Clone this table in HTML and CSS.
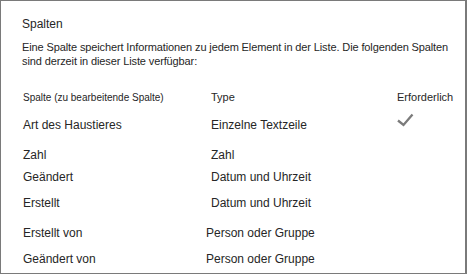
FILE: index.html
```html
<!DOCTYPE html>
<html>
<head>
    <title>Spalten</title>
    <link rel="stylesheet" href="styles.css">
    <meta name="viewport" content="width=device-width, initial-scale=1.0">
</head>
<body>
    <div class="panel">
        <h2>Spalten</h2>
        <p class="intro">Eine Spalte speichert Informationen zu jedem Element in der Liste. Die folgenden Spalten sind derzeit in dieser Liste verfügbar:</p>

        <div class="columns">
            <div class="row head">
                <span class="col-name">Spalte (zu bearbeitende Spalte)</span>
                <span>Type</span>
                <span>Erforderlich</span>
            </div>
            <div class="row tall">
                <span>Art des Haustieres</span>
                <span>Einzelne Textzeile</span>
                <span class="required">
                    <svg width="17" height="14" viewBox="0 0 17 14">
                        <polyline points="1,7.5 6.5,12 15.5,1.5" fill="none" stroke="#7b7b7b" stroke-width="2.3"/>
                    </svg>
                </span>
            </div>
            <div class="row short">
                <span>Zahl</span>
                <span>Zahl</span>
                <span></span>
            </div>
            <div class="row">
                <span>Geändert</span>
                <span>Datum und Uhrzeit</span>
                <span></span>
            </div>
            <div class="row tall">
                <span>Erstellt</span>
                <span>Datum und Uhrzeit</span>
                <span></span>
            </div>
            <div class="row">
                <span>Erstellt von</span>
                <span class="shift">Person oder Gruppe</span>
                <span></span>
            </div>
            <div class="row">
                <span>Geändert von</span>
                <span class="shift">Person oder Gruppe</span>
                <span></span>
            </div>
        </div>
    </div>
</body>
</html>
```

FILE: styles.css
```css
body {
    margin: 0;
    font-family: 'Liberation Sans', Arial, sans-serif;
    color: #262626;
    background-color: #fff;
}

.panel {
    box-sizing: border-box;
    width: 467px;
    height: 274px;
    border: 1px solid #7a7a7a;
    border-right-width: 2px;
    padding: 16px 10px 0 21px;
}

h2 {
    margin: 0;
    font-size: 12px;
    font-weight: normal;
    line-height: 14px;
}

.intro {
    margin: 9px 0 0;
    font-size: 11px;
    line-height: 14px;
    letter-spacing: -0.12px;
}

.columns {
    margin: 22px 0 0 1px;
}

.row {
    display: grid;
    grid-template-columns: 188px 186px auto;
    height: 26px;
    font-size: 12px;
    line-height: 14px;
}

.row.head {
    height: 28px;
    font-size: 11px;
    align-items: baseline;
}

.row.tall {
    height: 29.5px;
}

.row.short {
    height: 22.5px;
}

.col-name {
    font-size: 10px;
}

.shift {
    margin-left: -5px;
}

.required svg {
    display: block;
    margin-top: -5px;
}
```
